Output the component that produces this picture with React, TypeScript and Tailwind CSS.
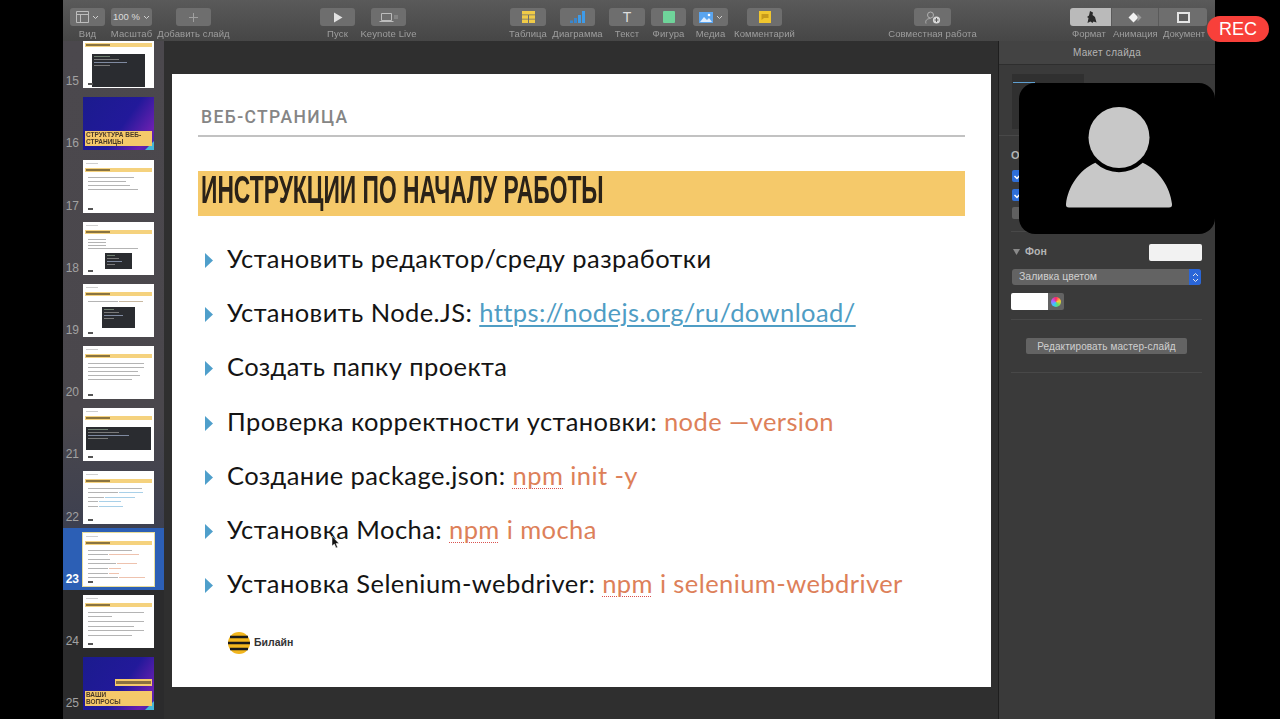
import React from "react";

const Tool = ({ label, className = "", children }: { label: string; className?: string; children: React.ReactNode }) => (
  <div className={`flex flex-col items-center shrink-0 ${className}`}>
    <div className="w-full h-[18px] rounded-[3px] bg-[#6e6e6e] flex items-center justify-center">{children}</div>
    <div className="mt-[2px] text-[9.5px] leading-[12px] text-[#9e9e9e] whitespace-nowrap tracking-[0.1px] blur-[0.3px]">{label}</div>
  </div>
);

const Chevron = () => (
  <svg width="7" height="5" viewBox="0 0 7 5" className="ml-[3px]"><path d="M1 1l2.5 2.5L6 1" fill="none" stroke="#d0d0d0" strokeWidth="1" /></svg>
);

const Toolbar = () => (
  <div className="h-[41px] shrink-0 flex pl-[7px] pt-[8px] bg-gradient-to-b from-[#5a5a5a] to-[#464646]">
    <Tool label="Вид" className="w-[35px]">
      <svg width="13" height="12" viewBox="0 0 13 12"><path d="M.5.5h12v11H.5zM.5 3.5h12M4.5 3.5v8" fill="none" stroke="#bcbcbc" /></svg>
      <Chevron />
    </Tool>
    <Tool label="Масштаб" className="w-[41px] ml-[6px]">
      <span className="text-[9.5px] text-[#dcdcdc]">100 %</span>
      <Chevron />
    </Tool>
    <Tool label="Добавить слайд" className="w-[35px] ml-[24px]">
      <svg width="11" height="11" viewBox="0 0 11 11"><path d="M5.5 1v9M1 5.5h9" stroke="#a0a0a0" /></svg>
    </Tool>
    <Tool label="Пуск" className="w-[35px] ml-[109px]">
      <svg width="10" height="11" viewBox="0 0 10 11"><path d="M1 .5l8.5 5-8.5 5z" fill="#e2e2e2" /></svg>
    </Tool>
    <Tool label="Keynote Live" className="w-[35px] ml-[16px]">
      <svg width="20" height="11" viewBox="0 0 20 11"><path d="M2.5 1.5h10v7h-10zM.5 9.5h14" fill="none" stroke="#bcbcbc" /><path d="M16 3v4M18 3v4" stroke="#9a9a9a" /></svg>
    </Tool>
    <Tool label="Таблица" className="w-[36px] ml-[104px]">
      <svg width="13" height="12" viewBox="0 0 13 12"><path d="M0 0h13v3.4H0zM0 4.3h6v3.4H0zM7 4.3h6v3.4H7zM0 8.6h6V12H0zM7 8.6h6V12H7z" fill="#f0cb48" /></svg>
    </Tool>
    <Tool label="Диаграмма" className="w-[35px] ml-[14px]">
      <svg width="15" height="12" viewBox="0 0 15 12"><path d="M0 9.5h3V12H0zM4 7h3v5H4z" fill="#3a86cc" /><path d="M8 4h3v8H8zM12 0h3v12h-3z" fill="#3f9be8" /></svg>
    </Tool>
    <Tool label="Текст" className="w-[36px] ml-[14px]">
      <span className="text-[14px] leading-none font-medium text-[#dedede]">T</span>
    </Tool>
    <Tool label="Фигура" className="w-[35px] ml-[6px]">
      <div className="w-[12px] h-[12px] bg-[#6fd49a] rounded-[1px]" />
    </Tool>
    <Tool label="Медиа" className="w-[35px] ml-[7px]">
      <svg width="14" height="11" viewBox="0 0 14 11"><path d="M0 0h14v11H0z" fill="#5aa5f0" /><path d="M1 10l4-5 3 3 2-2 3 4z" fill="#dfeeff" /><circle cx="10" cy="3" r="1.3" fill="#fff" /></svg>
      <Chevron />
    </Tool>
    <Tool label="Комментарий" className="w-[35px] ml-[19px]">
      <svg width="12" height="12" viewBox="0 0 12 12"><path d="M0 0h12v12H0z" fill="#f0c62e" /><path d="M2.5 3h7v4H5L2.5 9z" fill="#c89a1a" /></svg>
    </Tool>
    <Tool label="Совместная работа" className="w-[37px] ml-[132px]">
      <svg width="18" height="13" viewBox="0 0 18 13"><circle cx="6.5" cy="4" r="3" fill="none" stroke="#b0b0b0" /><path d="M2 12.5c-1-3 1-5 4.5-5" fill="none" stroke="#b0b0b0" /><circle cx="12.5" cy="9" r="3.6" fill="#d8d8d8" /><path d="M12.5 7v4M10.5 9h4" stroke="#5e5e5e" /></svg>
    </Tool>
    <div className="w-[137px] ml-[119px] shrink-0 flex flex-col">
      <div className="h-[18px] flex rounded-[3px] overflow-hidden">
        <div className="w-[41px] bg-[#bababa] flex items-center justify-center">
          <svg width="12" height="12" viewBox="0 0 12 12"><path d="M5 0l3 1.5-.5 2.5L10 6l1.5 5.5-3-1-1 1.5-2-1.5-3 1.5L3.5 7 2 6l2-1.5z" fill="#2a2a2a" /></svg>
        </div>
        <div className="w-[47px] bg-[#6e6e6e] border-l border-[#5a5a5a] flex items-center justify-center">
          <svg width="14" height="11" viewBox="0 0 14 11"><path d="M5.5 0.5L10.5 5.5 5.5 10.5 .5 5.5z" fill="#f2f2f2" /><path d="M9.5 1.5l4 4-4 4" fill="#9a9a9a" /></svg>
        </div>
        <div className="flex-1 bg-[#6e6e6e] border-l border-[#5a5a5a] flex items-center justify-center">
          <div className="w-[13px] h-[11px] border-2 border-[#e4e4e4] bg-[#5e5e5e]" />
        </div>
      </div>
      <div className="mt-[2px] flex text-[9.5px] leading-[12px] text-[#9e9e9e] whitespace-nowrap blur-[0.3px]">
        <span className="ml-[2px] w-[41px]">Формат</span>
        <span className="w-[50px]">Анимация</span>
        <span>Документ</span>
      </div>
    </div>
  </div>
);

type Line = number | [number, number];

type T = {
  n: number;
  deck?: boolean;
  title?: string;
  lines?: Line[];
  code?: string;
  gap?: number;
  accent?: string;
};

const thumbs: T[] = [
  { n: 15, code: "w-[53px] h-[33px] ml-[9px] mt-[2px]", lines: [] },
  { n: 16, deck: true, title: "СТРУКТУРА ВЕБ-\nСТРАНИЦЫ" },
  { n: 17, lines: [46, 38, 42, 50], gap: 3 },
  { n: 18, lines: [18, 18, 18, 50], gap: 2, code: "w-[27px] h-[16px] ml-[22px] mt-[4px]" },
  { n: 19, lines: [[30, 24]], accent: "#c8b8a0", code: "w-[33px] h-[21px] ml-[19px] mt-[5px]" },
  { n: 20, lines: [56, 56, 50, 52, 44], gap: 3 },
  { n: 21, lines: [], code: "w-[65px] h-[23px] ml-[3px] mt-[2px]" },
  { n: 22, lines: [54, [30, 24], [16, 30], [10, 22], [10, 24]], accent: "#a9d0e8", gap: 3.5 },
  { n: 23, lines: [44, [20, 30], 22, [28, 20], [20, 12], [20, 10], [30, 26]], accent: "#eec2ae", gap: 3.6 },
  { n: 24, lines: [56, 24, 56, 46, 56, 44], gap: 3.6 },
  { n: 25, deck: true, title: "ВАШИ\nВОПРОСЫ" },
];

const Thumb = ({ t }: { t: T }) => {
  const selected = t.n === 23;
  return (
    <div className={`h-[62.2px] shrink-0 flex items-end pb-[4px] ${selected ? "bg-[#2c5fb5]" : ""}`}>
      <div className={`w-[16px] mr-[4px] text-right text-[12px] leading-[14px] font-['Liberation_Sans'] ${selected ? "text-white font-bold" : "text-[#a2a2a2] font-medium"}`}>{t.n}</div>
      {t.deck ? (
        <div className="w-[71px] h-[53px] bg-[linear-gradient(125deg,#1b1b8e_0%,#22199a_55%,#6a20b0_85%,#3a2aa8_100%)] flex flex-col justify-end pb-[4px] px-[2px] relative overflow-hidden blur-[0.3px]">
          <div className="absolute right-0 bottom-0 w-0 h-0 border-l-[9px] border-l-transparent border-b-[9px] border-b-[#45b7d8]" />
          {t.n === 25 && (
            <div className="h-[7px] w-[37px] self-end mb-[5px] bg-[#f5c96a] flex items-center px-[1px] relative">
              <div className="h-[3px] w-full bg-[#8a7040]" />
            </div>
          )}
          <div className="bg-[#f5c96a] text-[#4a3a28] font-['Liberation_Sans'] font-bold text-[6.5px] leading-[6.5px] px-[1px] pt-[1px] h-[15px] whitespace-pre-line relative">{t.title}</div>
        </div>
      ) : (
        <div className={`w-[71px] h-[53px] bg-white flex flex-col relative overflow-hidden blur-[0.3px] ${selected ? "ring-1 ring-[#e8dc9a]" : ""}`}>
          <div className="h-[1px] w-[12px] bg-[#cfcfcf] mt-[3px] ml-[3px] shrink-0" />
          <div className="h-[4px] mt-[4px] mx-[2px] bg-[#f5d27e] shrink-0 flex items-center">
            <div className="h-[2px] w-[24px] ml-[1px] bg-[#8a7440]" />
          </div>
          <div className="flex flex-col mt-[5px] ml-[5px]" style={{ gap: t.gap ?? 3 }}>
            {(t.lines ?? []).map((l, i) => (
              <div key={i} className="h-[1px] shrink-0 flex">
                <div className="h-[1px] bg-[#b4b4b4]" style={{ width: Array.isArray(l) ? l[0] : l }} />
                {Array.isArray(l) && <div className="h-[1px] ml-[1px]" style={{ width: l[1], background: t.accent }} />}
              </div>
            ))}
          </div>
          {t.code && (
            <div className={`${t.code} bg-[#2a2c30] shrink-0 flex flex-col gap-[2px] p-[2px]`}>
              <div className="h-[1px] w-1/3 bg-[#6f7f70]" />
              <div className="h-[1px] w-1/2 bg-[#7a7a7a]" />
              <div className="h-[1px] w-2/3 bg-[#7f8aa0]" />
              <div className="h-[1px] w-1/3 bg-[#7a7a7a]" />
            </div>
          )}
          <div className="absolute left-[5px] bottom-[3px] w-[5px] h-[2px] bg-[#555]" />
        </div>
      )}
    </div>
  );
};

const Sidebar = () => (
  <div className="w-[101px] shrink-0 overflow-hidden bg-[linear-gradient(180deg,#4b484d_0%,#4a474c_55%,#3d4050_72%,#2b2b2c_72%,#2b2b2c_100%)]">
    <div className="-mt-[11px] flex flex-col">
      {thumbs.map((t) => (
        <Thumb key={t.n} t={t} />
      ))}
    </div>
  </div>
);

const Npm = () => (
  <span className="underline decoration-dotted decoration-[#d9534f] decoration-[1px] underline-offset-[3px]">npm</span>
);

const Bullet = ({ children }: { children: React.ReactNode }) => (
  <div className="h-[54.2px] flex items-center shrink-0">
    <svg width="8" height="15" viewBox="0 0 8 15" className="ml-[7px] mr-[14px] mt-[5px] shrink-0"><path d="M0 0l8 7.5L0 15z" fill="#4f9fcb" /></svg>
    <div className="whitespace-nowrap">{children}</div>
  </div>
);

const Slide = () => (
  <div className="w-[819px] h-[613px] bg-white flex flex-col pl-[26px] pr-[26px] font-['Lato'] shrink-0">
    <div className="pt-[33px] pl-[3px] h-[63px] text-[#858585] text-[17.5px] leading-[20px] tracking-[1.4px] font-medium font-['Roboto'] border-b-2 border-[#c2c2c2]">ВЕБ-СТРАНИЦА</div>
    <div className="mt-[34px] h-[45px] bg-[#f5c96a] pl-[3px] flex items-start">
      <span className="font-['Liberation_Sans'] font-bold text-[#2a2218] text-[39px] leading-[38px] whitespace-nowrap origin-left scale-x-[0.585]">ИНСТРУКЦИИ ПО НАЧАЛУ РАБОТЫ</span>
    </div>
    <div className="mt-[15px] flex flex-col text-[25.5px] text-[#141414] tracking-[0.42px]">
      <Bullet>Установить редактор/среду разработки</Bullet>
      <Bullet>Установить Node.JS: <span className="text-[#4f9dc4] underline underline-offset-[3px] decoration-[1.5px]">https://nodejs.org/ru/download/</span></Bullet>
      <Bullet>Создать папку проекта</Bullet>
      <Bullet>Проверка корректности установки: <span className="text-[#dd8059]">node —version</span></Bullet>
      <Bullet>Создание package.json: <span className="text-[#dd8059]"><Npm /> init -y</span></Bullet>
      <Bullet>Установка Mocha: <span className="text-[#dd8059]"><Npm /> i mocha</span></Bullet>
      <Bullet>Установка Selenium-webdriver: <span className="text-[#dd8059]"><Npm /> i selenium-webdriver</span></Bullet>
    </div>
    <div className="mt-[22px] ml-[30px] flex items-center gap-[4px]">
      <svg width="22" height="22" viewBox="0 0 22 22">
        <circle cx="11" cy="11" r="11" fill="#f2b61e" />
        <path d="M2 5h18M0 11h22M2 17h18" stroke="#1a1a1a" strokeWidth="2.6" />
      </svg>
      <span className="font-['Liberation_Sans'] text-[10.5px] text-[#333] font-bold">Билайн</span>
    </div>
  </div>
);

const Check = () => (
  <svg width="12" height="12" viewBox="0 0 12 12"><path d="M2.5 6l2.5 2.5L10 3" fill="none" stroke="#fff" strokeWidth="1.5" /></svg>
);

const Inspector = () => (
  <div className="w-[216px] shrink-0 bg-[#3a3a3a] flex flex-col font-['Liberation_Sans'] text-[#b4b4b4]">
    <div className="h-[24px] shrink-0 flex items-center justify-center text-[10px] tracking-[0.3px] border-b border-[#2e2e2e] bg-[#434343]">Макет слайда</div>
    <div className="h-[71px] shrink-0 border-b border-[#484848] pl-[13px] pt-[9px]">
      <div className="w-[72px] h-[55px] bg-[#303030] pt-[8px] pl-[1px]">
        <div className="h-[1px] w-[22px] bg-[#5f9fd0]" />
      </div>
    </div>
    <div className="h-[96px] shrink-0 mx-[12px] border-b border-[#484848] pt-[12px] text-[11px]">
      <div className="leading-[14px] font-bold">О</div>
      <div className="mt-[8px] flex flex-col gap-[6.5px] ml-[1px]">
        <div className="w-[12px] h-[12px] rounded-[2px] bg-[#2f6fd8]"><Check /></div>
        <div className="w-[12px] h-[12px] rounded-[2px] bg-[#2f6fd8]"><Check /></div>
        <div className="w-[12px] h-[12px] rounded-[2px] bg-[#606060]" />
      </div>
    </div>
    <div className="h-[88px] shrink-0 ml-[12px] mr-[13px] border-b border-[#484848] pt-[11px]">
      <div className="flex items-center h-[18px]">
        <svg width="7" height="6" viewBox="0 0 7 6" className="ml-[2px] mr-[5px]"><path d="M0 0h7L3.5 6z" fill="#8a8a8a" /></svg>
        <span className="text-[10.5px] font-bold">Фон</span>
        <div className="ml-auto w-[53px] h-[17px] bg-[#f2f2f2] rounded-[2px]" />
      </div>
      <div className="mt-[8px] ml-[1px] h-[16px] w-[189px] rounded-[3px] bg-[#636363] flex items-center pl-[7px] text-[10.5px] text-[#d0d0d0]">
        Заливка цветом
        <div className="ml-auto w-[12px] h-[16px] rounded-r-[3px] bg-[#2a66d8] flex items-center justify-center">
          <svg width="7" height="11" viewBox="0 0 7 11"><path d="M1 4l2.5-2.5L6 4M1 7l2.5 2.5L6 7" fill="none" stroke="#e8e8e8" /></svg>
        </div>
      </div>
      <div className="mt-[8px] flex">
        <div className="w-[37px] h-[17px] bg-white rounded-l-[2px]" />
        <div className="w-[16px] h-[17px] bg-[#636363] rounded-r-[2px] flex items-center justify-center">
          <div className="w-[10px] h-[10px] rounded-full bg-[conic-gradient(#f26,#fc3,#6d6,#3cf,#a6f,#f26)] blur-[0.5px]" />
        </div>
      </div>
    </div>
    <div className="h-[53px] shrink-0 ml-[12px] mr-[13px] border-b border-[#484848] pt-[18px] pl-[15px]">
      <div className="w-[161px] h-[16px] rounded-[2px] bg-[#636363] flex items-center justify-center text-[10px] text-[#d0d0d0] tracking-[0.1px]">Редактировать мастер-слайд</div>
    </div>
  </div>
);

export default function App() {
  return (
    <div className="w-[1280px] h-[719px] bg-black overflow-hidden relative flex font-['Liberation_Sans']">
      <div className="ml-[63px] w-[1152px] h-full flex flex-col bg-[#2e2e2e]">
        <Toolbar />
        <div className="flex-1 flex min-h-0">
          <Sidebar />
          <div className="w-[835px] shrink-0 pl-[8px] pt-[33px] bg-[#2f2f2f] border-r border-[#1e1e1e]">
            <Slide />
          </div>
          <Inspector />
        </div>
      </div>

      <div className="absolute left-[1207px] top-[16px] w-[62px] h-[26px] rounded-full bg-[#f8403a] text-white text-[18px] flex items-center justify-center font-['Liberation_Sans']">REC</div>

      <div className="absolute left-[1019px] top-[83px] w-[196px] h-[151px] rounded-[16px] bg-black flex items-center justify-center">
        <svg width="108" height="101" viewBox="0 0 108 101" className="ml-[3px] -mt-[2px]">
          <circle cx="54" cy="30.5" r="30.5" fill="#c8c8c8" />
          <path d="M30.3 55.8 A 34.7 34.7 0 0 0 77.7 55.8 C 94 63, 105 80, 107 97 Q 107.4 100.5 104 100.5 L 4 100.5 Q .6 100.5 1 97 C 3 80, 14 63, 30.3 55.8 Z" fill="#c8c8c8" />
        </svg>
      </div>

      <svg className="absolute left-[331px] top-[535px]" width="9" height="14" viewBox="0 0 9 14">
        <path d="M1 1v10l2.4-2 1.6 4 1.6-.7-1.6-3.8H8z" fill="#111" stroke="#fff" strokeWidth="0.5" />
      </svg>
    </div>
  );
}
